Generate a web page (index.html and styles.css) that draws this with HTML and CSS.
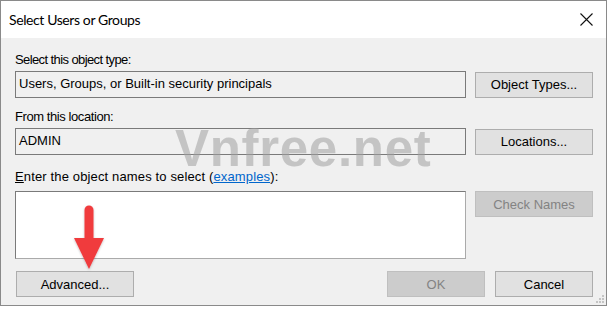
FILE: index.html
```html
<!DOCTYPE html>
<html>
<head>
<meta charset="utf-8">
<link rel="stylesheet" href="styles.css">
</head>
<body>
<div class="dialog">
  <div class="titlebar">
    <span class="title">Select Users or Groups</span>
    <svg class="close" width="13" height="13" viewBox="0 0 13 13"><path d="M0.5 0.5 L12.5 12.5 M12.5 0.5 L0.5 12.5" stroke="#111" stroke-width="1.1" fill="none"/></svg>
  </div>
  <div class="content">
    <div class="label l1">Select this object type:</div>
    <div class="row">
      <div class="field">Users, Groups, or Built-in security principals</div>
      <button class="btn">Object Types...</button>
    </div>
    <div class="label l2">From this location:</div>
    <div class="row">
      <div class="field">ADMIN</div>
      <button class="btn">Locations...</button>
    </div>
    <div class="label l3"><u>E</u>nter the object names to select (<a class="link">examples</a>):</div>
    <div class="row top">
      <div class="area"></div>
      <button class="btn disabled">Check Names</button>
    </div>
    <div class="footer">
      <button class="btn">Advanced...</button>
      <div class="spacer"></div>
      <button class="btn disabled small">OK</button>
      <button class="btn small">Cancel</button>
    </div>
  </div>
  <div class="watermark">Vnfree.net</div>
  <svg class="arrow" width="40" height="72" viewBox="0 0 40 72">
    <defs><filter id="sh" x="-30%" y="-30%" width="160%" height="160%"><feDropShadow dx="0" dy="1" stdDeviation="1.2" flood-color="#000" flood-opacity="0.25"/></filter></defs>
    <g filter="url(#sh)">
      <line x1="19" y1="8" x2="19" y2="40" stroke="#f03a3d" stroke-width="9" stroke-linecap="round"/>
      <polygon points="4,36 34,36 19,67" fill="#f03a3d"/>
    </g>
  </svg>
  <svg class="grip" width="10" height="10" viewBox="0 0 10 10">
    <g fill="#c4c4c4">
      <rect x="7" y="1" width="2" height="2"/>
      <rect x="4" y="4" width="2" height="2"/><rect x="7" y="4" width="2" height="2"/>
      <rect x="1" y="7" width="2" height="2"/><rect x="4" y="7" width="2" height="2"/><rect x="7" y="7" width="2" height="2"/>
    </g>
  </svg>
</div>
</body>
</html>
```
FILE: styles.css
```css
html, body {
  margin: 0;
  padding: 0;
  background: #ffffff;
}
.dialog {
  position: relative;
  width: 605px;
  height: 304px;
  border: 1px solid #8a8a8a;
  background: #f0f0f0;
  font-family: "Liberation Sans", Arial, sans-serif;
  font-size: 13px;
  color: #000;
  overflow: hidden;
}
.titlebar {
  height: 37px;
  background: #ffffff;
  display: flex;
  align-items: center;
  padding-left: 8px;
  padding-right: 13px;
}
.title {
  font-family: Lato, "Noto Sans", sans-serif;
  font-size: 14px;
  letter-spacing: -0.4px;
  color: #000;
  flex: 1;
  margin-top: -1px;
}
.close {
  display: block;
}
.content {
  padding: 0 13px 0 14px;
}
.label {
  height: 16px;
  line-height: 16px;
}
.l1 { margin-top: 14px; letter-spacing: -0.6px; }
.l2 { margin-top: 11px; letter-spacing: -0.42px; }
.l3 { margin-top: 14px; letter-spacing: 0.14px; }
.row {
  display: flex;
  align-items: center;
  gap: 9px;
  margin-top: 3px;
}
.row.top { align-items: flex-start; margin-top: 6px; }
.field {
  width: 446px;
  height: 25px;
  border: 1px solid #7a7a7a;
  background: #f0f0f0;
  line-height: 23px;
  padding-left: 3px;
  box-sizing: content-box;
}
.area {
  width: 446px;
  height: 66px;
  border: 1px solid #aaaaaa;
  border-top-color: #7a7a7a;
  border-left-color: #7a7a7a;
  background: #ffffff;
  padding-left: 3px;
}
.btn {
  width: 118px;
  height: 26px;
  border: 1px solid #adadad;
  background: #e1e1e1;
  font-family: "Liberation Sans", Arial, sans-serif;
  font-size: 13px;
  color: #000;
  padding: 0;
  margin: 0;
}
.btn.disabled {
  background: #cccccc;
  border-color: #bfbfbf;
  color: #838383;
}
.btn.small { width: 98px; }
.footer {
  display: flex;
  align-items: center;
  gap: 10px;
  margin-top: 12px;
  padding-left: 1px;
}
.spacer { flex: 1; }
.link {
  color: #0066cc;
  text-decoration: underline;
}
.watermark {
  position: absolute;
  left: 174px;
  top: 131px;
  font-family: "Liberation Sans", Arial, sans-serif;
  font-weight: bold;
  font-size: 51px;
  letter-spacing: 0.7px;
  color: rgba(160, 160, 160, 0.55);
  line-height: 34px;
  height: 34px;
}
.arrow {
  position: absolute;
  left: 69px;
  top: 201px;
}
.grip {
  position: absolute;
  right: 1px;
  bottom: 1px;
}
```
